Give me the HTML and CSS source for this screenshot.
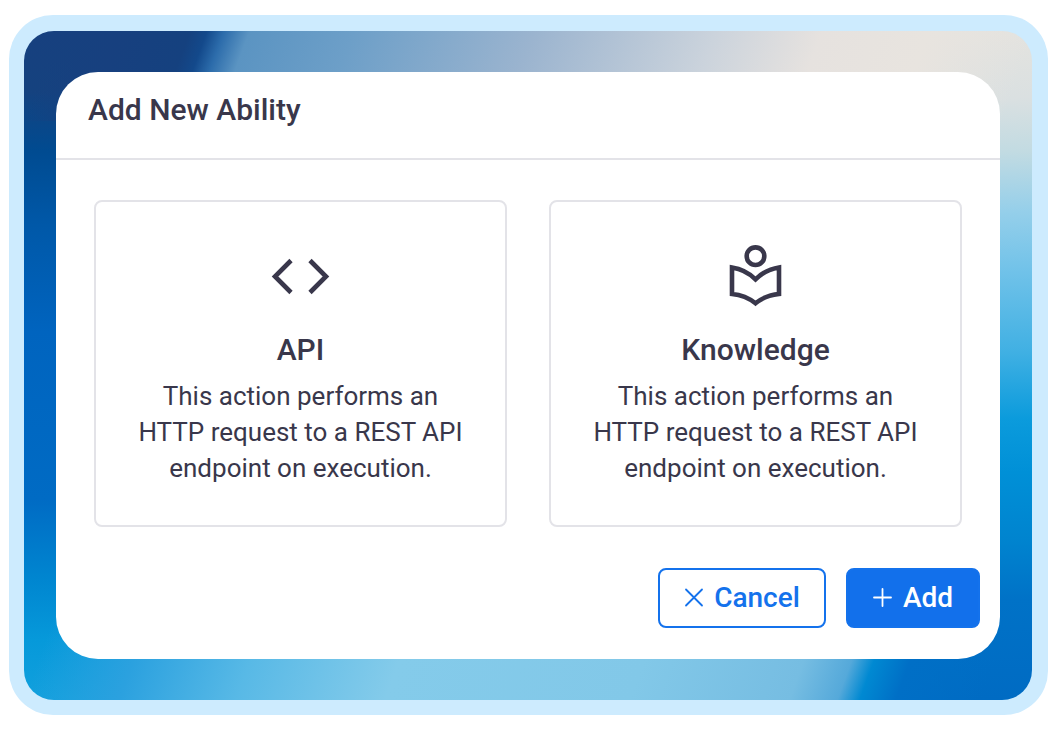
FILE: index.html
```html
<!DOCTYPE html>
<html lang="en">
<head>
<meta charset="utf-8">
<meta name="viewport" content="width=device-width, initial-scale=1">
<title>Add New Ability</title>
<link rel="stylesheet" href="styles.css">
</head>
<body>
<main class="frame">
  <div class="backdrop">
    <section class="dialog" role="dialog" aria-labelledby="dialog-title">
      <header class="dialog-header">
        <h1 class="dialog-title" id="dialog-title">Add New Ability</h1>
      </header>
      <div class="options">
        <button class="option" type="button">
          <svg class="option-icon" viewBox="0 0 70 70" aria-hidden="true">
            <path d="M25 19.500 9 35.500l16 16M44 19.500l16 16-16 16" fill="none" stroke="currentColor" stroke-width="4.600"/>
          </svg>
          <span class="option-name">API</span>
          <span class="option-text">This action performs an HTTP request to a REST API endpoint on execution.</span>
        </button>
        <button class="option" type="button">
          <svg class="option-icon" viewBox="0 0 70 70" aria-hidden="true">
            <g fill="none" stroke="currentColor" stroke-width="4.600">
              <circle cx="34.500" cy="15.200" r="8.800"/>
              <path d="M11 26.500Q24.500 28.500 34.500 38.300 44.500 28.500 58 26.500V53Q44.500 54.200 34.500 62.300 24.500 54.200 11 53Z"/>
            </g>
          </svg>
          <span class="option-name">Knowledge</span>
          <span class="option-text">This action performs an HTTP request to a REST API endpoint on execution.</span>
        </button>
      </div>
      <footer class="actions">
        <button class="action action-cancel" type="button">
          <svg class="action-icon" viewBox="0 0 20 20" aria-hidden="true"><path d="M2 1.500 18 17.500M18 1.500 2 17.500" fill="none" stroke="currentColor" stroke-width="1.800" stroke-linecap="round"/></svg>
          Cancel
        </button>
        <button class="action action-add" type="button">
          <svg class="action-icon" viewBox="0 0 20 20" aria-hidden="true"><path d="M9.500 1v17M1 9.500h17" fill="none" stroke="currentColor" stroke-width="1.800" stroke-linecap="round"/></svg>
          Add
        </button>
      </footer>
    </section>
  </div>
</main>
</body>
</html>
```

FILE: styles.css
```css
* {
  box-sizing: border-box;
}

body {
  margin: 0;
  background: #fff;
  color: #39374b;
  font-family: Roboto, "Liberation Sans", sans-serif;
}

.frame {
  margin: 15px 8px 16px 9px;
  padding: 16px 16px 15px 15px;
  border-radius: 44px;
  background: #cdebfe;
}

/* Top band, bottom band, left edge and right edge of the blue wash. */
.backdrop {
  padding: 41px 32px;
  border-radius: 30px;
  background:
    linear-gradient(110deg, rgba(23, 64, 127, 0) 30px, #17407f 90px, #15417f 156px, #13498b 172px, #2c6cab 188px, #5b94c2 212px, #6d9fc8 310px, #9bb4cf 480px, #cbd3dc 650px, #e6e2df 750px, #e8e4df 850px, rgba(228, 228, 224, 0) 950px) top / 100% 90px no-repeat,
    linear-gradient(110deg, rgba(10, 156, 218, 0) 30px, #2ba1df 120px, #58b9e6 230px, #84cbea 370px, #82c8e8 600px, #76bde2 750px, #55a9da 795px, #0089d2 816px, #006fc6 850px, rgba(0, 109, 197, 0) 930px) bottom / 100% 90px no-repeat,
    linear-gradient(180deg, #17407f 0, #15427f 9%, #004b91 18%, #0058a8 29%, #0064bf 45%, #006bc4 70%, #0086d0 82%, #0699da 91%, #11a0dd 100%) left / 50% 100% no-repeat,
    linear-gradient(180deg, #e4e3df 0, #dae0e1 10%, #c2dbe2 18%, #95cfea 27%, #70c2e9 36%, #40b0e3 48%, #0b9bdc 58%, #0090d7 66%, #0084cf 76%, #0072c7 85%, #006bc3 100%) right / 50% 100% no-repeat;
}

.dialog {
  border-radius: 42px;
  background: #fff;
  overflow: hidden;
}

.dialog-header {
  padding: 18px 32px 28px;
  border-bottom: 2px solid #e3e3e8;
}

.dialog-title {
  margin: 0;
  font-size: 30px;
  line-height: 40px;
  font-weight: 500;
}

.options {
  display: grid;
  grid-template-columns: 1fr 1fr;
  gap: 42px;
  padding: 40px 38px 41px;
}

.option {
  display: flex;
  flex-direction: column;
  align-items: center;
  padding: 39px;
  border: 2px solid #e3e3e8;
  border-radius: 8px;
  background: #fff;
  color: inherit;
  font-family: inherit;
  text-align: center;
  cursor: pointer;
}

.option-icon {
  width: 70px;
  height: 70px;
  margin-bottom: 19px;
}

.option-name {
  margin-bottom: 8px;
  font-size: 30px;
  line-height: 40px;
  font-weight: 500;
}

.option-text {
  font-size: 26px;
  line-height: 36px;
}

.actions {
  display: flex;
  justify-content: flex-end;
  gap: 20px;
  padding: 0 20px 31px;
}

.action {
  display: flex;
  align-items: center;
  gap: 10px;
  height: 60px;
  padding: 0 24px;
  border: 2px solid #1472ec;
  border-radius: 8px;
  font-family: inherit;
  font-size: 28px;
  line-height: 36px;
  font-weight: 500;
  cursor: pointer;
}

.action-cancel {
  background: #fff;
  color: #1472ec;
}

.action-add {
  padding: 0 25px;
  background: #1270eb;
  color: #fff;
}

.action-icon {
  width: 20px;
  height: 20px;
}
```
